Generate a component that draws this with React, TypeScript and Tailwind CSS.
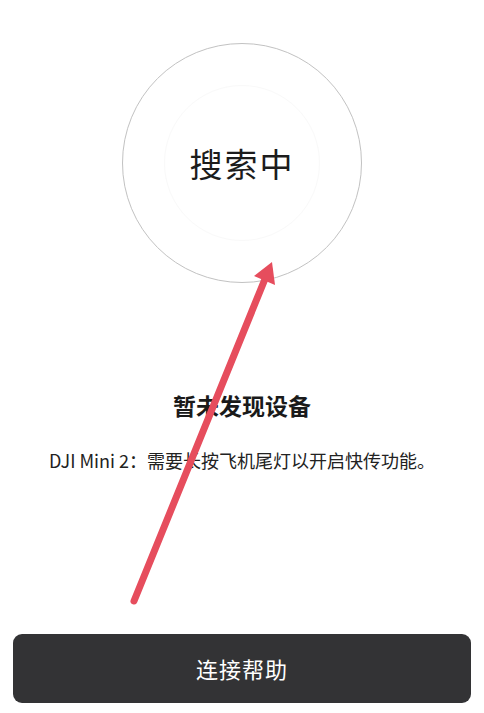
import React from "react";

const font = { fontFamily: '"Noto Sans CJK SC", "Noto Sans", sans-serif' };

function Arrow() {
  return (
    <svg
      className="absolute inset-0 pointer-events-none"
      width="484"
      height="713"
      viewBox="0 0 484 713"
    >
      <line
        x1="134"
        y1="601"
        x2="265"
        y2="279"
        stroke="#e64d5d"
        strokeWidth="7"
        strokeLinecap="round"
      />
      <polygon points="272,262 275,285 254,276" fill="#e64d5d" />
    </svg>
  );
}

export default function App() {
  return (
    <div
      className="relative w-[484px] h-[713px] bg-white flex flex-col items-center overflow-hidden"
      style={font}
    >
      <div className="mt-[43px] w-[240px] h-[240px] rounded-full border-[1.5px] border-[#c2c2c2] flex items-center justify-center">
        <div className="w-[156px] h-[156px] rounded-full border border-[#f9f9f9] flex items-center justify-center">
          <span className="text-[33px] leading-none tracking-[2px] text-[#1c1c1c]">
            搜索中
          </span>
        </div>
      </div>

      <h2 className="mt-[106px] text-[23px] leading-[32px] font-bold text-[#1a1a1a]">
        暂未发现设备
      </h2>
      <p className="mt-[26px] text-[18px] leading-[27px] text-[#222]">
        DJI Mini 2：需要长按飞机尾灯以开启快传功能。
      </p>

      <button className="mt-auto mb-[10px] w-[458px] h-[69px] rounded-[9px] bg-[#333335] text-white text-[22px] tracking-[1px]">
        连接帮助
      </button>

      <Arrow />
    </div>
  );
}
